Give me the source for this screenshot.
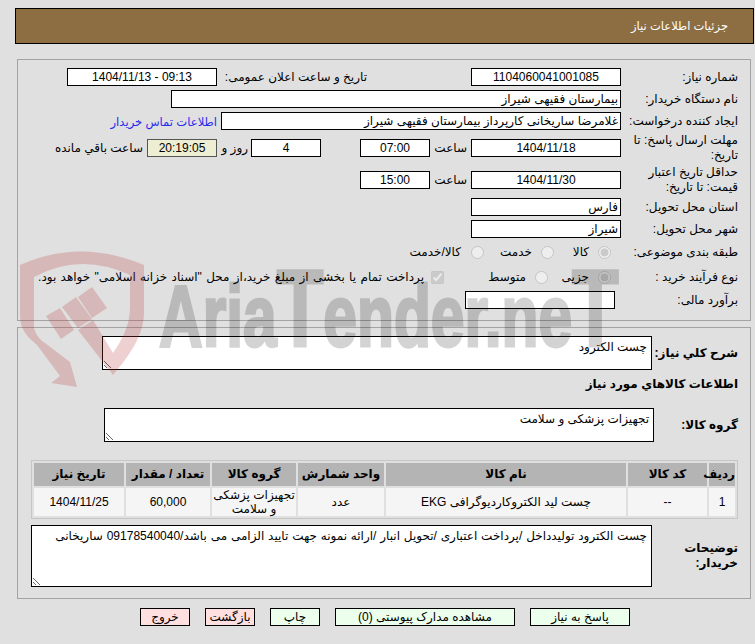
<div class="page" dir="rtl">
  <header class="title"><span>جزئیات اطلاعات نیاز</span></header>

  <section class="panel info">
    <div class="row">
      <label class="lab" for="f1">شماره نیاز:</label>
      <input id="f1" class="box w150 c" readonly value="1104060041001085" />
      <span class="announce">تاریخ و ساعت اعلان عمومی:</span>
      <input class="box w150 c ltr" readonly value="1404/11/13 - 09:13" />
    </div>
    <div class="row">
      <span class="lab">نام دستگاه خریدار:</span>
      <input class="box w450" readonly value="بیمارستان فقیهی شیراز" />
    </div>
    <div class="row">
      <span class="lab">ایجاد کننده درخواست:</span>
      <input class="box w400" readonly value="غلامرضا ساریخانی کارپرداز بیمارستان فقیهی شیراز" />
      <span class="link">اطلاعات تماس خریدار</span>
    </div>
    <div class="row tall">
      <span class="lab wrap">مهلت ارسال پاسخ: تا تاریخ:</span>
      <input class="box w150 c" readonly value="1404/11/18" />
      <span class="hour">ساعت</span>
      <input class="box w70 c" readonly value="07:00" />
      <span class="spacer"></span>
      <input class="box w70 c" readonly value="4" />
      <span class="days">روز و</span>
      <input class="box w70 c timer" readonly value="20:19:05" />
      <span class="left">ساعت باقي مانده</span>
    </div>
    <div class="row tall">
      <span class="lab wrap">حداقل تاریخ اعتبار قیمت: تا تاریخ:</span>
      <input class="box w150 c" readonly value="1404/11/30" />
      <span class="hour">ساعت</span>
      <input class="box w70 c" readonly value="15:00" />
    </div>
    <div class="row">
      <span class="lab">استان محل تحویل:</span>
      <input class="box w150" readonly value="فارس" />
    </div>
    <div class="row">
      <span class="lab">شهر محل تحویل:</span>
      <input class="box w150" readonly value="شیراز" />
    </div>
    <div class="row r8">
      <span class="lab">طبقه بندی موضوعی:</span>
      <label class="opt o1"><input type="radio" name="cat" disabled checked /><span>كالا</span></label>
      <label class="opt o2"><input type="radio" name="cat" disabled /><span>خدمت</span></label>
      <label class="opt o3"><input type="radio" name="cat" disabled /><span>كالا/خدمت</span></label>
    </div>
    <div class="row r9">
      <span class="lab">نوع فرآیند خرید :</span>
      <label class="opt o1b"><input type="radio" name="proc" disabled checked /><span>جزیی</span></label>
      <label class="opt o4"><input type="radio" name="proc" disabled /><span>متوسط</span></label>
      <label class="opt o5"><input type="checkbox" disabled checked /><span>پرداخت تمام يا بخشی از مبلغ خرید،از محل "اسناد خزانه اسلامی" خواهد بود.</span></label>
    </div>
    <div class="row budget">
      <span class="lab">برآورد مالی:</span>
      <input class="box w150" readonly value="" />
    </div>
  </section>

  <section class="panel need">
    <div class="row first">
      <span class="lab bold l98">شرح کلي نیاز:</span>
      <textarea class="area a1" readonly>چست الکترود</textarea>
    </div>
    <h2>اطلاعات کالاهاي مورد نياز</h2>
    <div class="row second">
      <span class="lab bold l96">گروه کالا:</span>
      <textarea class="area a2" readonly>تجهیزات پزشکی و سلامت</textarea>
    </div>
    <table>
      <thead>
        <tr>
          <th class="t1">ردیف</th><th class="t2">کد کالا</th><th class="t3">نام کالا</th><th class="t4">واحد شمارش</th><th class="t5">گروه کالا</th><th class="t6">تعداد / مقدار</th><th class="t7">تاریخ نیاز</th>
        </tr>
      </thead>
      <tbody>
        <tr>
          <td>1</td><td>--</td><td>چست لید الکتروکاردیوگرافی EKG</td><td>عدد</td><td>تجهیزات پزشکی<br />و سلامت</td><td>60,000</td><td>1404/11/25</td>
        </tr>
      </tbody>
    </table>
    <div class="row third">
      <span class="lab bold l98">توضیحات خریدار:</span>
      <textarea class="area a3" readonly>چست الکترود تولیدداخل /پرداخت اعتباری /تحویل انبار /ارائه نمونه جهت تایید الزامی می باشد/09178540040 ساریخانی</textarea>
    </div>
  </section>

  <nav class="actions">
    <button class="go b100">پاسخ به نیاز</button>
    <button class="go b180">مشاهده مدارک پیوستی (0)</button>
    <button class="go b50">چاپ</button>
    <button class="stop b50">بازگشت</button>
    <button class="stop b50">خروج</button>
  </nav>

  <div class="mark" dir="ltr" aria-hidden="true">
    <svg class="shield" viewBox="0 0 160 150" width="160" height="150">
      <path class="sh" d="M20 15 Q80 -12 144 15 L144 62 C144 85 130 105 113 125 L78 80 L93 70 L113 103 C122 90 130 75 130 58 L130 25 Q80 2 34 27 L34 78 C36 85 40 90 45 93 L70 112 L77 137 L51 133 L60 126 L37 95 C25 85 20 78 20 65 Z" />
      <polygon class="sh" points="46,66 60,58 74,80 61,89" />
      <polygon class="sh" points="62,57 76,47 92,69 78,78" />
      <polygon class="sh" points="78,47 92,37 107,58 92,68" />
    </svg>
    <span class="brand">Aria<span class="big">T</span>ender.ne<span class="big">T</span></span>
  </div>
</div>

<style>
  :global(body) {
    margin: 0;
    background: #e0e0e0;
  }
  .page {
    position: relative;
    width: 755px;
    height: 644px;
    overflow: hidden;
    box-sizing: border-box;
    padding: 8px 1px 0 15px;
    background: #e0e0e0;
    color: #000;
    font: 12px/15px "Liberation Sans", "DejaVu Sans", sans-serif;
  }
  .title {
    box-sizing: border-box;
    height: 36px;
    display: flex;
    align-items: center;
    padding-right: 25px;
    border: 1px solid #000;
    background: #8d6e43;
    color: #fff;
    font-size: 11.5px;
  }
  .panel {
    box-sizing: border-box;
    margin: 0 3px 0 2px;
    border: 1px solid #a3a3a3;
  }
  .info {
    margin-top: 15px;
    height: 262px;
    padding: 8px 0 0;
    display: flex;
    flex-direction: column;
    gap: 4px;
  }
  .need {
    margin-top: 6px;
    height: 272px;
    padding: 8px 0 0;
  }
  .row {
    display: flex;
    align-items: center;
    min-height: 18px;
  }
  .tall { height: 28px; }
  .r8 { height: 21px; }
  .r9 { height: 20px; }
  .lab {
    box-sizing: border-box;
    flex: none;
    width: 129px;
    padding-right: 12px;
  }
  .wrap { padding-left: 6px; }
  .box {
    box-sizing: border-box;
    flex: none;
    height: 18px;
    margin: 0;
    padding: 0 2px;
    border: 1px solid #000;
    background: #fff;
    color: #000;
    font: inherit;
    direction: rtl;
    outline: none;
  }
  .c { text-align: center; }
  .ltr { direction: ltr; }
  .w150 { width: 150px; }
  .w450 { width: 450px; }
  .w400 { width: 400px; }
  .w70 { width: 70px; }
  .announce {
    box-sizing: border-box;
    width: 254px;
    padding-right: 104px;
    white-space: nowrap;
  }
  .link {
    margin-right: 4px;
    color: #2a2aee;
    font-size: 11.6px;
    white-space: nowrap;
  }
  .hour {
    width: 41px;
    padding-right: 4px;
    box-sizing: border-box;
  }
  .spacer { width: 39px; }
  .days {
    width: 34px;
    padding-right: 3px;
    box-sizing: border-box;
  }
  .timer { background: #eeeed2; border-color: #555; }
  .left { margin-right: 4px; white-space: nowrap; }
  .opt {
    display: flex;
    align-items: center;
    white-space: nowrap;
  }
  .opt input {
    margin: 0;
    width: 13px;
    height: 13px;
  }
  .opt span { margin-right: 9px; }
  .o1 { margin-right: 10px; width: 57px; }
  .o1b { margin-right: 10px; width: 63px; }
  .o2 { width: 70px; }
  .o3 span { margin-right: 10px; }
  .o4 { width: 104px; }
  .o5 span { margin-right: 7px; word-spacing: 1px; }
  .budget .lab { width: 135px; }
  .bold { font-weight: 700; }
  .l98 { width: 98px; }
  .l96 { width: 96px; }
  .area {
    box-sizing: border-box;
    flex: none;
    display: block;
    margin: 0;
    padding: 3px 4px;
    border: 1px solid #000;
    background: #fff;
    color: #000;
    font: inherit;
    direction: rtl;
    outline: none;
  }
  .first { height: 34px; }
  .a1 { width: 550px; height: 34px; }
  h2 {
    margin: 6px 0 0;
    padding-right: 12px;
    font-size: 12px;
    line-height: 16px;
    font-weight: 700;
  }
  .second { margin-top: 16px; height: 34px; }
  .a2 { width: 550px; height: 34px; }
  table {
    box-sizing: border-box;
    width: 707px;
    height: 59px;
    margin: 18px 12px 0 0;
    border: 1px solid #c6c6c6;
    border-collapse: separate;
    border-spacing: 2px;
    table-layout: fixed;
  }
  th {
    height: 23px;
    padding: 0;
    background: #b4b4b4;
    font-weight: 700;
    font-size: 12px;
  }
  td {
    height: 28px;
    padding: 0;
    background: #f5f5f5;
    text-align: center;
    font-size: 12px;
    line-height: 14px;
    white-space: nowrap;
  }
  .t1 { width: 26px; }
  .t2 { width: 79px; }
  .t3 { width: 240px; }
  .t4 { width: 86px; }
  .t5 { width: 84px; }
  .t6 { width: 84px; }
  .third { margin-top: 6px; height: 62px; }
  .a3 { width: 621px; height: 62px; word-spacing: 0.5px; }
  .actions {
    display: flex;
    justify-content: flex-start;
    gap: 15px;
    margin-top: 9px;
    padding-right: 124px;
  }
  button {
    box-sizing: border-box;
    height: 18px;
    padding: 0;
    border: 1px solid #000;
    border-radius: 0;
    color: #000;
    font: inherit;
    line-height: 15px;
  }
  .go { background: #ecffec; }
  .stop { background: #ffdfdf; }
  .b100 { width: 100px; }
  .b180 { width: 180px; }
  .b50 { width: 50px; }
  .mark {
    position: absolute;
    left: 0;
    top: 250px;
    width: 755px;
    height: 150px;
    pointer-events: none;
  }
  .shield {
    position: absolute;
    left: 0;
    top: 0;
  }
  .sh { fill: #b93232; fill-opacity: 0.23; }
  .brand {
    position: absolute;
    left: 159px;
    top: 14px;
    color: #000;
    opacity: 0.17;
    font: 700 87px/100px "Liberation Sans", sans-serif;
    -webkit-text-stroke: 3px #000;
    white-space: nowrap;
    transform: scaleX(0.695);
    transform-origin: left top;
  }
  .big { font-size: 110px; line-height: 87px; }
</style>
